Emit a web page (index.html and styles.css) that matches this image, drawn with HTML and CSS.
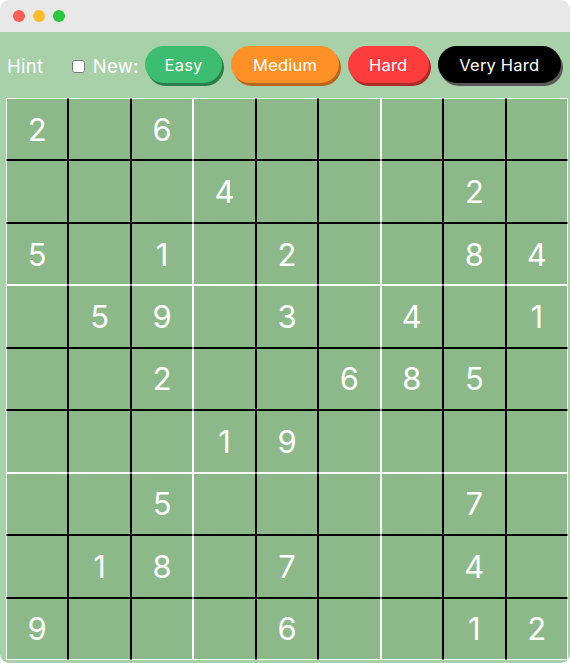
FILE: index.html
```html
<!DOCTYPE html>
<html>
<head>
<meta charset="utf-8">
<link rel="stylesheet" href="styles.css">
</head>
<body>
<div class="window">
  <div class="titlebar">
    <span class="light red"></span>
    <span class="light yellow"></span>
    <span class="light green"></span>
  </div>
  <div class="app">
    <div class="toolbar">
      <span class="hint">Hint</span>
      <label class="newlabel"><input type="checkbox" class="check"><span class="newtext">New:</span></label>
      <button class="btn easy">Easy</button>
      <button class="btn medium">Medium</button>
      <button class="btn hard">Hard</button>
      <button class="btn veryhard">Very Hard</button>
    </div>
    <div class="board" id="board"></div>
  </div>
</div>
<script>
  var data = [
    "2.6......",
    "...4...2.",
    "5.1.2..84",
    ".59.3.4.1",
    "..2..685.",
    "...19....",
    "..5....7.",
    ".18.7..4.",
    "9...6..12"
  ];
  var board = document.getElementById('board');
  for (var r = 0; r < 9; r++) {
    for (var c = 0; c < 9; c++) {
      var d = document.createElement('div');
      var cls = 'cell';
      if (c % 3 === 0) cls += ' bl';
      if (c % 3 === 2) cls += ' br';
      if (r % 3 === 0) cls += ' bt';
      if (r % 3 === 2) cls += ' bb';
      d.className = cls;
      var ch = data[r][c];
      d.textContent = ch === '.' ? '' : ch;
      board.appendChild(d);
    }
  }
</script>
</body>
</html>
```

FILE: styles.css
```css
html, body {
  margin: 0;
  padding: 0;
  background: #ffffff;
}

.window {
  width: 570px;
  height: 663px;
  overflow: hidden;
  border-radius: 9px;
  display: flex;
  flex-direction: column;
  font-family: "Inter", "Noto Sans", sans-serif;
}

.titlebar {
  height: 32px;
  background: #e8e8e8;
  display: flex;
  align-items: center;
  padding-left: 13px;
  flex-shrink: 0;
}

.light {
  width: 12px;
  height: 12px;
  border-radius: 50%;
  margin-right: 8px;
}
.light.red { background: #fe5f57; }
.light.yellow { background: #febc2e; }
.light.green { background: #28c840; }

.app {
  flex: 1;
  background: #a8d1a9;
  display: flex;
  flex-direction: column;
}

.toolbar {
  display: flex;
  align-items: center;
  height: 40px;
  margin-top: 14px;
  padding-left: 7px;
  color: #ffffff;
  font-size: 18.5px;
}

.hint {
  width: 65px;
  letter-spacing: 0.3px;
}

.newlabel {
  display: flex;
  align-items: center;
}

.check {
  width: 13px;
  height: 13px;
  margin: 0 8px 0 0;
}

.newtext {
  width: 52px;
  letter-spacing: 0.3px;
}

.btn {
  height: 37px;
  border: none;
  border-radius: 19px;
  color: #ffffff;
  font-family: "Inter", "Noto Sans", sans-serif;
  font-size: 16.5px;
  letter-spacing: 0.2px;
  padding: 0;
  margin-right: 9px;
  margin-bottom: 3px;
}

.easy { width: 78px; background: #3dbd71; box-shadow: 2px 3px 0 #2c7d4a; }
.medium { width: 108px; background: #fd9127; box-shadow: 2px 3px 0 #b8661c; }
.hard { width: 81px; background: #fd3c3e; box-shadow: 2px 3px 0 #ad2a2b; }
.veryhard { width: 124px; background: #000000; box-shadow: 2px 3px 0 #5a5a5a; }

.board {
  margin: 12px 0 0 6px;
  width: 562px;
  height: 562px;
  display: grid;
  grid-template-columns: repeat(9, 1fr);
  grid-template-rows: repeat(9, 1fr);
}

.cell {
  background: #8cb88a;
  border: 1px solid #000000;
  color: #ffffff;
  font-size: 31px;
  font-weight: 400;
  display: flex;
  align-items: center;
  justify-content: center;
}

.cell.bl { border-left-color: #ffffff; }
.cell.br { border-right-color: #ffffff; }
.cell.bt { border-top-color: #ffffff; }
.cell.bb { border-bottom-color: #ffffff; }
```
